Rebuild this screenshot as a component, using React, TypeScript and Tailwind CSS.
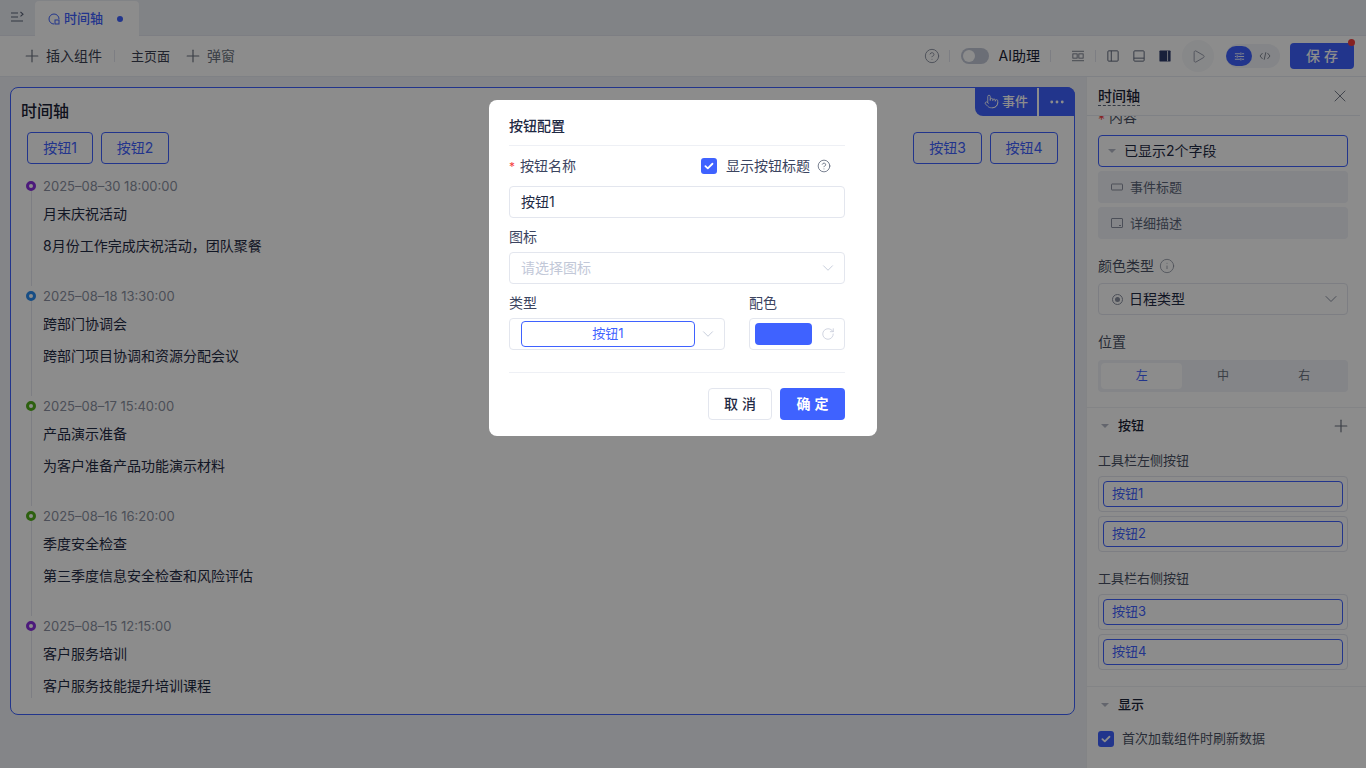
import { ChevronDown, CircleHelp, Info, Plus, RotateCw, X, Play, Pointer, Ellipsis } from "lucide-react";

const events = [
  { time: "2025–08–30 18:00:00", title: "月末庆祝活动", desc: "8月份工作完成庆祝活动，团队聚餐", dot: "border-[#8b2fe0]" },
  { time: "2025–08–18 13:30:00", title: "跨部门协调会", desc: "跨部门项目协调和资源分配会议", dot: "border-[#2b8cf0]" },
  { time: "2025–08–17 15:40:00", title: "产品演示准备", desc: "为客户准备产品功能演示材料", dot: "border-[#52b01c]" },
  { time: "2025–08–16 16:20:00", title: "季度安全检查", desc: "第三季度信息安全检查和风险评估", dot: "border-[#52b01c]" },
  { time: "2025–08–15 12:15:00", title: "客户服务培训", desc: "客户服务技能提升培训课程", dot: "border-[#8b2fe0]" },
];

function OutlineButton({ label, width }: { label: string; width: string }) {
  return (
    <button className={`${width} h-8 rounded border border-[#3f62ff] text-sm text-[#3f62ff]`}>{label}</button>
  );
}

function ButtonSlot({ label }: { label: string }) {
  return (
    <div className="h-9 rounded border border-[#e3e6ee] p-1">
      <div className="h-[26px] rounded border border-[#3f62ff] px-2 flex items-center text-[13px] text-[#3f62ff]">{label}</div>
    </div>
  );
}

function Check() {
  return (
    <span className="w-4 h-4 rounded-[3px] bg-[#3f62ff] flex items-center justify-center shrink-0">
      <svg viewBox="0 0 16 16" className="w-3 h-3" fill="none" stroke="white" strokeWidth="2.4" strokeLinecap="round" strokeLinejoin="round">
        <path d="M3.2 8.2l3.2 3 6.2-6.2" />
      </svg>
    </span>
  );
}

function Caret() {
  return <span className="w-0 h-0 border-x-[4px] border-x-transparent border-t-[4px] border-t-[#b4b9c6]" />;
}

function Toolbar() {
  return (
    <div className="h-[41px] shrink-0 bg-white border-b border-[#e8ebf2] flex items-center text-sm text-[#3b4152]">
      <Plus className="ml-[22px] w-5 h-5 text-[#6b7280]" strokeWidth={1.4} />
      <span className="ml-[4px]">插入组件</span>
      <span className="ml-[12px] mr-[16px] w-px h-3 bg-[#e3e6ee]" />
      <span className="text-[13px]">主页面</span>
      <Plus className="ml-[13px] w-5 h-5 text-[#6b7280]" strokeWidth={1.4} />
      <span className="ml-[4px] text-[#6b7280]">弹窗</span>

      <div className="ml-auto flex items-center">
        <CircleHelp className="w-4 h-4 text-[#8a90a0]" strokeWidth={1.4} />
        <span className="ml-[9px] mr-[11px] w-px h-3 bg-[#e3e6ee]" />
        <span className="w-[28px] h-4 rounded-full bg-[#c3c9d8] p-[2px] flex">
          <span className="w-3 h-3 rounded-full bg-white" />
        </span>
        <span className="ml-[10px] text-sm text-[#1a2236]">AI助理</span>
        <span className="mx-[10px] w-px h-3 bg-[#e3e6ee]" />
        <svg viewBox="0 0 14 14" className="ml-[11px] w-3 h-3 text-[#6b7280]" fill="none" stroke="currentColor" strokeWidth="1">
          <path d="M0 1.5h14M0 12.5h14" />
          <rect x="1" y="4.5" width="5" height="5" />
          <rect x="8" y="4.5" width="5" height="5" />
        </svg>
        <span className="mx-[11px] w-px h-3 bg-[#e3e6ee]" />
        <svg viewBox="0 0 14 14" className="w-3 h-3 text-[#5b6478]" fill="none" stroke="currentColor" strokeWidth="1.1">
          <rect x="1" y="1" width="12" height="12" rx="1" />
          <path d="M5 1v12" />
        </svg>
        <svg viewBox="0 0 14 14" className="ml-[14px] w-3 h-3 text-[#5b6478]" fill="none" stroke="currentColor" strokeWidth="1.1">
          <rect x="1" y="1" width="12" height="12" rx="1" />
          <path d="M1 9.5h12" />
        </svg>
        <svg viewBox="0 0 14 14" className="ml-[14px] w-3 h-3" fill="none">
          <rect x="0.5" y="0.5" width="13" height="13" rx="1" fill="#2d3b6b" />
          <path d="M10 1v12" stroke="white" strokeWidth="0.9" />
        </svg>
        <span className="ml-[11px] w-8 h-8 rounded-full bg-[#f6f7fa] flex items-center justify-center">
          <Play className="w-[15px] h-[15px] text-[#8a90a0]" strokeWidth={1.4} />
        </span>
        <div className="ml-[12px] h-6 w-[54px] rounded-full bg-[#f0f2f7] flex items-center">
          <span className="w-[26px] h-5 rounded-full bg-[#3f62ff] flex items-center justify-center">
            <svg viewBox="0 0 12 12" className="w-[11px] h-[11px]" fill="none" stroke="white" strokeWidth="1">
              <path d="M1 3h5.5M8.5 3H11M1 6h1.5M4.5 6H11M1 9h5.5M8.5 9H11" />
              <path d="M7.5 1.6v2.8M3.5 4.6v2.8M7.5 7.6v2.8" />
            </svg>
          </span>
          <svg viewBox="0 0 14 12" className="ml-[7px] w-3 h-[10px] text-[#6b7280]" fill="none" stroke="currentColor" strokeWidth="1">
            <path d="M4 2.5L1 6l3 3.5M10 2.5L13 6l-3 3.5M8 1.5L6 10.5" />
          </svg>
        </div>
        <div className="relative ml-[10px] mr-[12px]">
          <button className="block w-16 h-[26px] rounded bg-[#3f62ff] pl-[4px] text-sm font-medium text-white tracking-[4px]">保存</button>
          <span className="absolute -top-[4px] -right-[1px] w-[7px] h-[7px] rounded-full bg-[#f53f3f]" />
        </div>
      </div>
    </div>
  );
}

function SidePanel() {
  return (
    <aside className="w-[280px] shrink-0 bg-white flex flex-col border-l border-[#eef0f5] overflow-hidden">
      <div className="relative z-10 h-[39px] shrink-0 mr-[6px] bg-white border-b border-[#e8ebf2] flex items-center justify-between pl-[11px]">
        <span className="text-sm font-medium text-[#1a2236] border-b border-dashed border-[#5b6478] leading-[19px] mt-[-1px]">时间轴</span>
        <X className="w-5 h-5 text-[#6b7280] mr-[10px]" strokeWidth={1.1} />
      </div>
      <div className="flex-1 overflow-hidden">
        <div className="mt-[-6px] h-[14px] pl-[11px] text-sm leading-[14px] text-[#4a5164]">
          <span className="relative top-[3px] text-[#f53f3f]">*</span> 内容
        </div>
        <div className="px-[11px] pr-[18px] mt-[11px] flex flex-col gap-1">
          <div className="h-8 rounded border border-[#3f62ff] px-[9px] flex items-center gap-[8px] text-sm text-[#1f2a44]">
            <Caret />
            <span>已显示2个字段</span>
          </div>
          <div className="h-8 rounded bg-[#f0f2f7] px-[13px] flex items-center gap-[7px] text-[#5b6478]">
            <svg viewBox="0 0 12 12" className="w-3 h-3" fill="none" stroke="#8a90a0"><rect x="0.5" y="3" width="11" height="6" rx="0.5" /></svg>
            <span className="pt-px text-[13px]">事件标题</span>
          </div>
          <div className="h-8 rounded bg-[#f0f2f7] px-[13px] flex items-center gap-[7px] text-[#5b6478]">
            <svg viewBox="0 0 12 12" className="w-3 h-3" fill="none" stroke="#8a90a0"><rect x="0.5" y="1.5" width="11" height="9" rx="0.5" /><path d="M8 8.5h2" /></svg>
            <span className="pt-px text-[13px]">详细描述</span>
          </div>
        </div>

        <div className="px-[11px] pr-[18px] mt-[17px] flex items-center gap-[5px] text-sm leading-5 text-[#4a5164]">
          颜色类型 <Info className="w-4 h-4 text-[#8a90a0]" strokeWidth={1.2} />
        </div>
        <div className="ml-[11px] mr-[18px] mt-[7px] h-8 rounded border border-[#e3e6ee] pl-[13px] pr-[6px] flex items-center text-sm text-[#1f2a44]">
          <span className="w-[11px] h-[11px] rounded-full border border-[#8a90a0] flex items-center justify-center">
            <span className="w-[5px] h-[5px] rounded-full bg-[#8a90a0]" />
          </span>
          <span className="ml-[6px]">日程类型</span>
          <ChevronDown className="ml-auto w-5 h-5 text-[#8a90a0]" strokeWidth={1.2} />
        </div>

        <div className="pl-[11px] mt-[17px] text-sm leading-5 text-[#4a5164]">位置</div>
        <div className="ml-[11px] mr-[18px] mt-[8px] h-8 rounded bg-[#f0f2f7] p-[3px] grid grid-cols-3 text-xs">
          <span className="rounded-sm bg-white text-[#3f62ff] flex items-center justify-center">左</span>
          <span className="text-[#6b7280] flex items-center justify-center">中</span>
          <span className="text-[#6b7280] flex items-center justify-center">右</span>
        </div>

        <div className="mt-[15px] border-t border-[#eef0f5] h-[36px] pl-[14px] pr-[15px] flex items-center">
          <Caret />
          <span className="ml-[9px] text-[13px] font-medium text-[#1a2236]">按钮</span>
          <Plus className="ml-auto w-5 h-5 text-[#6b7280]" strokeWidth={1.4} />
        </div>

        <div className="pl-[11px] mt-[7px] text-[13px] leading-5 text-[#4a5164]">工具栏左侧按钮</div>
        <div className="ml-[11px] mr-[18px] mt-[6px] flex flex-col gap-1">
          <ButtonSlot label="按钮1" />
          <ButtonSlot label="按钮2" />
        </div>

        <div className="pl-[11px] mt-[16px] text-[13px] leading-5 text-[#4a5164]">工具栏右侧按钮</div>
        <div className="ml-[11px] mr-[18px] mt-[6px] flex flex-col gap-1">
          <ButtonSlot label="按钮3" />
          <ButtonSlot label="按钮4" />
        </div>

        <div className="mt-4 border-t border-[#eef0f5] h-[36px] pl-[14px] flex items-center">
          <Caret />
          <span className="ml-[9px] text-[13px] font-medium text-[#1a2236]">显示</span>
        </div>
        <div className="pl-[11px] mt-[7px] flex items-center gap-2 text-[13px] text-[#4a5164]">
          <Check />
          首次加载组件时刷新数据
        </div>
      </div>
    </aside>
  );
}

function Canvas() {
  return (
    <main className="flex-1 min-w-0 p-[10px] pr-[11px]">
      <div className="relative h-[628px] rounded-lg border border-[#3f62ff] bg-white">
        <div className="absolute -top-px -right-px h-[29px] w-[100px] flex rounded-bl-lg rounded-tr-lg overflow-hidden text-white text-[13px] font-medium">
          <div className="w-[62px] bg-[#3f62ff] flex items-center justify-center gap-[3px]">
            <Pointer className="w-[15px] h-[15px]" strokeWidth={1.4} />
            事件
          </div>
          <div className="ml-[2px] flex-1 bg-[#3f62ff] flex items-center justify-center">
            <Ellipsis className="w-[18px] h-[18px]" strokeWidth={1.8} />
          </div>
        </div>

        <div className="h-[44px] pl-[10px] pt-[10px] text-base font-medium leading-[26px] text-[#1a2236]">时间轴</div>
        <div className="px-4 flex gap-2 justify-between">
          <div className="flex gap-2">
            <OutlineButton label="按钮1" width="w-[66px]" />
            <OutlineButton label="按钮2" width="w-[68px]" />
          </div>
          <div className="flex gap-2">
            <OutlineButton label="按钮3" width="w-[69px]" />
            <OutlineButton label="按钮4" width="w-[68px]" />
          </div>
        </div>

        <div className="mt-[12px] pl-4">
          {events.map((ev, i) => (
            <div key={ev.time} className={`relative pl-4 ${i < events.length - 1 ? "h-[110px]" : "h-[82px]"}`}>
              <span className="absolute left-[4px] top-[10px] bottom-0 w-px bg-[#e3e6ee]" />
              <span className={`absolute -left-px top-[5px] w-[10px] h-[10px] rounded-full border-[3px] bg-white ${ev.dot}`} />
              <div className="h-5 leading-5 text-[13px] text-[#8a90a0]">{ev.time}</div>
              <div className="mt-[8px] h-5 leading-5 text-sm text-[#1f2a44]">{ev.title}</div>
              <div className="mt-[12px] h-5 leading-5 text-sm text-[#1f2a44]">{ev.desc}</div>
            </div>
          ))}
        </div>
      </div>
    </main>
  );
}

function Modal() {
  return (
    <div className="fixed inset-0 z-20 bg-black/45 flex justify-center items-start pt-[100px]">
      <div className="w-[388px] h-[336px] rounded-lg bg-white pl-5 pr-8 flex flex-col">
        <div className="h-[46px] shrink-0 pt-[6px] border-b border-[#eef0f5] flex items-center text-sm font-medium text-[#1f2a44]">按钮配置</div>
        <div className="h-[40px] flex items-center text-sm text-[#3b4460]">
          <span className="text-[#f53f3f] mr-[5px] mt-[2px] text-xs">*</span>
          按钮名称
          <span className="ml-auto flex items-center mr-[14px]">
            <Check />
            <span className="ml-[9px]">显示按钮标题</span>
            <CircleHelp className="ml-[7px] w-[14px] h-[14px] text-[#5b6478]" strokeWidth={1.4} />
          </span>
        </div>
        <div className="h-8 shrink-0 rounded border border-[#e3e6ee] px-[11px] flex items-center text-sm text-[#1f2a44]">按钮1</div>
        <div className="mt-[9px] h-[20px] leading-5 text-sm text-[#3b4460]">图标</div>
        <div className="mt-[5px] h-8 shrink-0 rounded border border-[#e3e6ee] pl-[11px] pr-[7px] flex items-center justify-between text-sm text-[#c2c8d8]">
          请选择图标
          <ChevronDown className="w-[18px] h-[18px] text-[#c2c8d8]" strokeWidth={1.2} />
        </div>
        <div className="mt-[9px] flex gap-6">
          <div className="w-[216px]">
            <div className="h-5 leading-5 text-sm text-[#3b4460]">类型</div>
            <div className="mt-[5px] h-8 rounded border border-[#e3e6ee] pl-[11px] pr-[7px] flex items-center justify-between">
              <span className="w-[174px] h-[26px] rounded border border-[#3f62ff] flex items-center justify-center text-[13px] text-[#3f62ff]">按钮1</span>
              <ChevronDown className="w-[18px] h-[18px] text-[#c2c8d8]" strokeWidth={1.2} />
            </div>
          </div>
          <div className="w-[96px]">
            <div className="h-5 leading-5 text-sm text-[#3b4460]">配色</div>
            <div className="mt-[5px] h-8 rounded border border-[#e3e6ee] pl-[5px] pr-[9px] flex items-center justify-between">
              <span className="w-[57px] h-[22px] rounded-sm bg-[#3f62ff]" />
              <RotateCw className="w-[14px] h-[14px] text-[#c2c8d8]" strokeWidth={1.3} />
            </div>
          </div>
        </div>
        <div className="mt-[22px] border-t border-[#eef0f5] pt-[15px] flex justify-end gap-2">
          <button className="w-16 h-8 rounded border border-[#e3e6ee] pl-[4px] text-sm font-medium text-[#1f2a44] tracking-[4px]">取消</button>
          <button className="w-[65px] h-8 rounded bg-[#3f62ff] pl-[4px] text-sm font-semibold text-white tracking-[4px]">确定</button>
        </div>
      </div>
    </div>
  );
}

export default function App() {
  return (
    <div className="w-[1366px] h-[768px] overflow-hidden bg-[#f0f2f7] flex flex-col font-[Inter,'Noto_Sans_CJK_SC',sans-serif]">
      <div className="h-[36px] shrink-0 bg-[#ebeef5] flex items-end border-b border-[#e3e6ee]">
        <svg viewBox="0 0 14 12" className="ml-[10px] mb-[12px] w-[14px] h-3 text-[#5b6478]" fill="none" stroke="currentColor" strokeWidth="1.1">
          <path d="M1 2h7M1 6h7M1 10h12M10.5 1l2.5 2.2-2.5 2.2" />
        </svg>
        <div className="ml-[11px] w-[104px] h-[35px] rounded-t bg-white flex items-center pl-[13px] translate-y-px">
          <svg viewBox="0 0 12 12" className="w-3 h-3" fill="none" stroke="#3f62ff" strokeWidth="1">
            <path d="M6 11A5 5 0 1 1 11 6" />
            <rect x="7" y="7" width="4" height="4" />
          </svg>
          <span className="ml-[4px] text-[13px] font-medium text-[#3f62ff]">时间轴</span>
          <span className="ml-[14px] w-[6px] h-[6px] rounded-full bg-[#3f62ff]" />
        </div>
      </div>
      <Toolbar />
      <div className="flex-1 min-h-0 flex">
        <Canvas />
        <SidePanel />
      </div>
      <Modal />
    </div>
  );
}
